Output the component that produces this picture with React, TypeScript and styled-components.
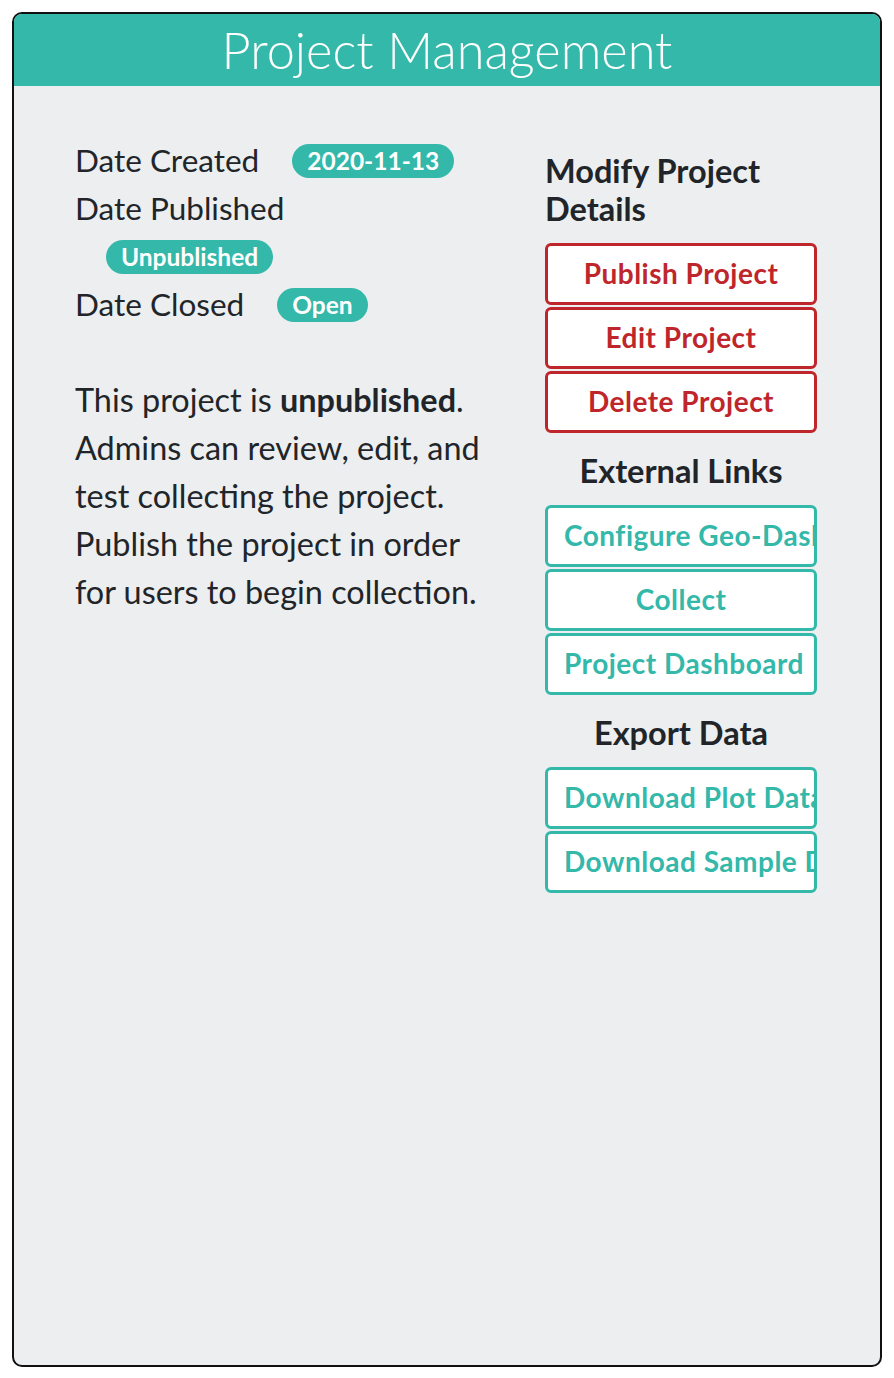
import React from 'react';
import styled, { createGlobalStyle } from 'styled-components';

const TEAL = '#33b8aa';
const RED = '#bf262b';

const GlobalStyle = createGlobalStyle`
  html, body {
    margin: 0;
    padding: 0;
    background: #ffffff;
  }
  body {
    font-family: Lato, "Open Sans", sans-serif;
    color: #212529;
  }
  * { box-sizing: border-box; }
`;

function App() {
  return (
    <>
      <GlobalStyle />
      <Page>
        <Card>
          <Header>Project Management</Header>
          <Body>
            <LeftColumn>
              <DateList>
                <DateRow>
                  Date Created
                  <Badge>2020-11-13</Badge>
                </DateRow>
                <DateRow>Date Published</DateRow>
                <DateRow>
                  <Badge $indent>Unpublished</Badge>
                </DateRow>
                <DateRow>
                  Date Closed
                  <Badge>Open</Badge>
                </DateRow>
              </DateList>
              <Description>
                This project is <strong>unpublished</strong>. Admins can review, edit, and
                test collecting the project. Publish the project in order for users to begin
                collection.
              </Description>
            </LeftColumn>

            <RightColumn>
              <SectionTitle>Modify Project Details</SectionTitle>
              <ButtonGroup>
                <ActionButton $variant="danger">Publish Project</ActionButton>
                <ActionButton $variant="danger">Edit Project</ActionButton>
                <ActionButton $variant="danger">Delete Project</ActionButton>
              </ButtonGroup>

              <SectionTitle $center>External Links</SectionTitle>
              <ButtonGroup>
                <ActionButton>Configure Geo-Dash</ActionButton>
                <ActionButton>Collect</ActionButton>
                <ActionButton>Project Dashboard</ActionButton>
              </ButtonGroup>

              <SectionTitle $center>Export Data</SectionTitle>
              <ButtonGroup>
                <ActionButton>Download Plot Data</ActionButton>
                <ActionButton>Download Sample Data</ActionButton>
              </ButtonGroup>
            </RightColumn>
          </Body>
        </Card>
      </Page>
    </>
  );
}

export default App;

const Page = styled.div`
  padding: 12px 12px 11px 12px;
  height: 1378px;
`;

const Card = styled.div`
  height: 100%;
  display: flex;
  flex-direction: column;
  border: 2px solid #111;
  border-radius: 10px;
  overflow: hidden;
  background: #eceeef;
`;

const Header = styled.div`
  height: 72px;
  flex: none;
  display: flex;
  align-items: center;
  justify-content: center;
  background: ${TEAL};
  color: #ffffff;
  font-family: Lato, sans-serif;
  font-weight: 300;
  font-size: 50.5px;
  padding-bottom: 2px;
`;

const Body = styled.div`
  display: grid;
  grid-template-columns: 1fr 272px;
  column-gap: 45px;
  padding: 50px 63px 0 61px;
`;

const LeftColumn = styled.div`
  display: flex;
  flex-direction: column;
`;

const DateList = styled.div`
  display: flex;
  flex-direction: column;
`;

const DateRow = styled.div`
  display: flex;
  align-items: center;
  height: 48px;
  font-size: 31.5px;
  white-space: nowrap;
`;

const Badge = styled.span<{ $indent?: boolean }>`
  display: inline-flex;
  align-items: center;
  height: 34px;
  margin-left: ${(p) => (p.$indent ? '31px' : '33px')};
  padding: 0 15px 2px;
  border-radius: 17px;
  background: ${TEAL};
  color: #ffffff;
  font-weight: 700;
  font-size: 24.5px;
  margin-top: 2px;
`;

const Description = styled.p`
  margin: 48px 0 0;
  font-size: 32.4px;
  line-height: 48px;
  width: 415px;

  strong {
    font-weight: 700;
  }
`;

const RightColumn = styled.div`
  display: flex;
  flex-direction: column;
  padding-top: 16px;
`;

const SectionTitle = styled.h2<{ $center?: boolean }>`
  margin: 0 0 15px;
  font-size: 32.5px;
  font-weight: 700;
  line-height: 38px;
  text-align: ${(p) => (p.$center ? 'center' : 'left')};

  & + div + & {
    margin-top: 19px;
  }
`;

const ButtonGroup = styled.div`
  display: flex;
  flex-direction: column;
  gap: 2px;
`;

const ActionButton = styled.button<{ $variant?: 'danger' | 'teal' }>`
  height: 62px;
  width: 100%;
  padding: 0 16px 2px;
  border: 3px solid ${(p) => (p.$variant === 'danger' ? RED : TEAL)};
  border-radius: 6px;
  background: #ffffff;
  color: ${(p) => (p.$variant === 'danger' ? RED : TEAL)};
  font-family: Lato, sans-serif;
  font-weight: 700;
  font-size: 28px;
  letter-spacing: 0.5px;
  white-space: nowrap;
  overflow: hidden;
  text-align: center;
  cursor: pointer;
`;
